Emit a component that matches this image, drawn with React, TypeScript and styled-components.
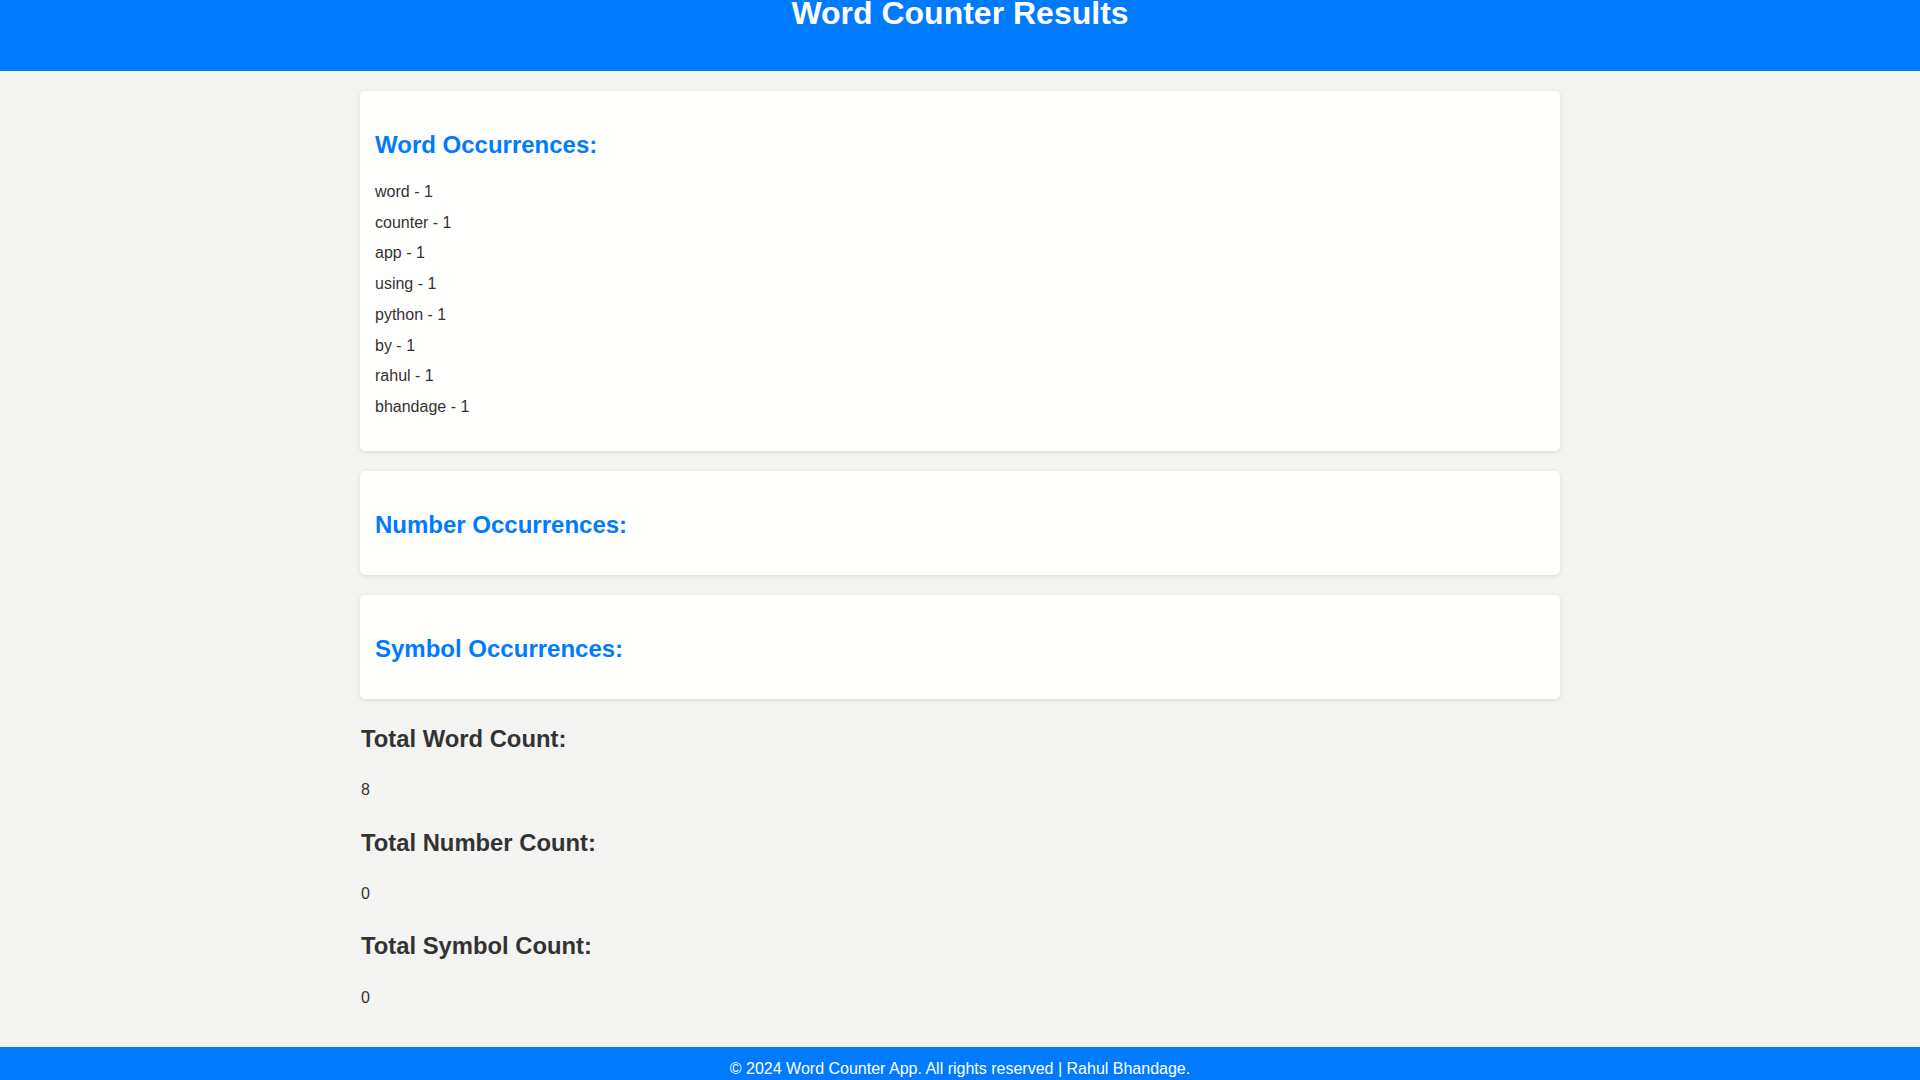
import React from "react";
import styled, { createGlobalStyle } from "styled-components";

const GlobalStyle = createGlobalStyle`
  html, body {
    margin: 0;
    padding: 0;
    background: #f4f4f2;
    font-family: Arial, "Liberation Sans", Helvetica, sans-serif;
    color: #333;
  }
`;

const Header = styled.header`
  background: #007bff;
  color: #fff;
  height: 71px;
  text-align: center;
  overflow: hidden;
`;

const Title = styled.h1`
  margin: -5px 0 0;
  font-size: 32px;
  font-weight: bold;
  line-height: 37px;
`;

const Main = styled.main`
  width: 1200px;
  margin: 0 auto;
  padding: 20px 0 40px;
`;

const Cards = styled.div`
  display: flex;
  flex-direction: column;
  gap: 20px;
`;

const Card = styled.section`
  background: #fffffd;
  border-radius: 5px;
  box-shadow: 0 1px 5px rgba(0, 0, 0, 0.1);
  padding: 20px 15px 18px;
`;

const CardTitle = styled.h2`
  margin: 20px 0 18px;
  font-size: 24px;
  line-height: 28px;
  font-weight: bold;
  color: #007bff;
`;

const List = styled.ul`
  list-style: none;
  margin: 2px 0 10px;
  padding: 0;
`;

const Item = styled.li`
  font-size: 16px;
  line-height: 30.7px;
  color: #333;
`;

const Totals = styled.div`
  display: flex;
  flex-direction: column;
  padding-top: 26px;
  padding-left: 1px;
`;

const TotalBlock = styled.div`
  display: flex;
  flex-direction: column;
  & + & {
    margin-top: 29px;
  }
`;

const TotalHeading = styled.h3`
  margin: 0;
  font-size: 23.8px;
  line-height: 27px;
  font-weight: bold;
  color: #333;
`;

const TotalValue = styled.p`
  margin: 29.5px 0 0;
  font-size: 16px;
  line-height: 18.4px;
  color: #333;
`;

const Footer = styled.footer`
  background: #007bff;
  color: #fff;
  text-align: center;
  font-size: 16px;
  line-height: 18.4px;
  padding: 13px 0 14px;
`;

const words: [string, number][] = [
  ["word", 1],
  ["counter", 1],
  ["app", 1],
  ["using", 1],
  ["python", 1],
  ["by", 1],
  ["rahul", 1],
  ["bhandage", 1],
];

const sections: { title: string; items: [string, number][] }[] = [
  { title: "Word Occurrences:", items: words },
  { title: "Number Occurrences:", items: [] },
  { title: "Symbol Occurrences:", items: [] },
];

const totals: [string, number][] = [
  ["Total Word Count:", 8],
  ["Total Number Count:", 0],
  ["Total Symbol Count:", 0],
];

export default function App() {
  return (
    <>
      <GlobalStyle />
      <Header>
        <Title>Word Counter Results</Title>
      </Header>
      <Main>
        <Cards>
          {sections.map((s) => (
            <Card key={s.title}>
              <CardTitle>{s.title}</CardTitle>
              {s.items.length > 0 && (
                <List>
                  {s.items.map(([w, c]) => (
                    <Item key={w}>
                      {w} - {c}
                    </Item>
                  ))}
                </List>
              )}
            </Card>
          ))}
        </Cards>
        <Totals>
          {totals.map(([label, value]) => (
            <TotalBlock key={label}>
              <TotalHeading>{label}</TotalHeading>
              <TotalValue>{value}</TotalValue>
            </TotalBlock>
          ))}
        </Totals>
      </Main>
      <Footer>© 2024 Word Counter App. All rights reserved | Rahul Bhandage.</Footer>
    </>
  );
}
